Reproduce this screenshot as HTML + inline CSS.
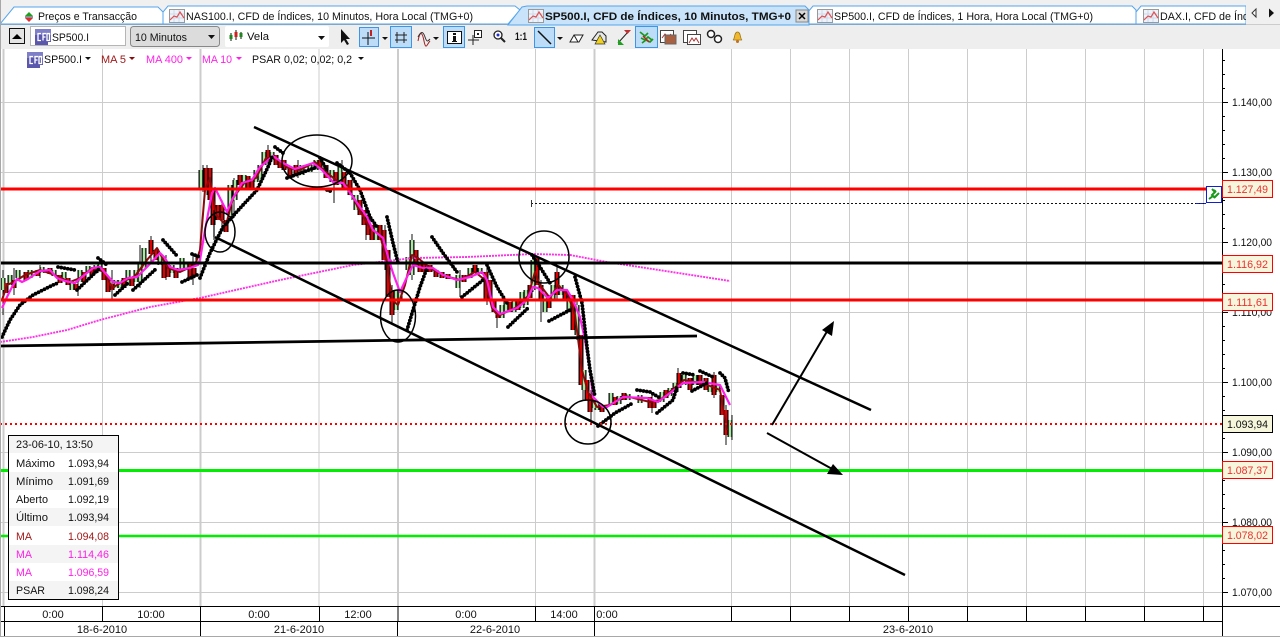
<!DOCTYPE html>
<html><head><meta charset="utf-8"><style>
html,body{margin:0;padding:0;width:1280px;height:637px;overflow:hidden;background:#fff}
svg{display:block}
text{font-family:"Liberation Sans",sans-serif;font-size:11px;fill:#111}
</style></head><body>
<svg width="1280" height="637" viewBox="0 0 1280 637" xmlns="http://www.w3.org/2000/svg">
<defs>
<g id="ci"><rect x=".5" y=".5" width="15" height="13" fill="#eef3fa" stroke="#999"/><path d="M1 5h14M1 9h14M5 1v12M10 1v12" stroke="#cdd9ea" fill="none"/><path d="M1 11L5 7 8 8 11 3 15 9" stroke="#e05050" fill="none" stroke-width="1.2"/></g>
<g id="cfd"><rect width="16" height="16" fill="#5a57ad"/><rect x="0" y="0" width="16" height="6" fill="#7f7fc8"/><path d="M6 4.5H3v7h3M8 11.5v-7h3M8 8h2.5M12 4.5h2.5v7H12z" stroke="#fff" stroke-width="1.3" fill="none"/><rect x="13" y="13" width="3" height="3" fill="#fff"/></g>
<path id="red" d="M6 283v10M14 280v8M26 272v8M38 270v6M50 268v6M60 275v8M68 278v7M76 284v6M84 272v10M92 268v8M104 268v12M108 278v14M112 284v6M124 278v10M132 278v8M151 240v14M156 250v10M164 262v16M168 265v12M176 268v10M190 262v16M194 268v8M206 168v20M210 168v32M213 190v35M218 205v15M222 205v15M226 220v12M240 175v10M248 176v12M252 180v10M268 150v12M276 155v10M280 160v8M284 160v10M290 168v10M296 165v10M320 160v8M326 165v13M336 172v13M344 172v16M350 180v15M360 200v15M364 210v15M368 215v20M372 225v15M380 225v15M384 230v30M388 250v47M392 290v25M416 250v15M420 262v10M424 263v9M430 265v7M436 270v7M442 272v6M448 274v5M464 275v7M475 265v7M486 272v28M490 280v20M494 300v12M498 312v6M510 302v10M518 300v10M530 285v13M537 258v27M541 285v15M549 295v13M557 272v23M565 290v10M573 295v35M581 335v50M587 380v20M590 395v17M602 405v7M615 397v8M624 393v7M650 397v11M654 400v8M666 390v8M679 373v15M690 378v12M700 375v10M706 378v12M714 375v20M722 395v20M726 410v25"/>
<path id="grn" d="M3 278v12M10 275v10M18 270v8M30 270v8M42 267v6M54 270v6M64 272v6M72 282v8M80 270v12M88 266v6M96 265v8M100 263v8M116 280v8M120 280v8M128 270v16M136 270v12M140 262v20M144 248v20M160 255v10M172 265v8M182 258v12M186 262v8M198 255v8M201 170v18M230 185v30M235 180v20M244 175v15M256 170v12M260 165v15M264 152v13M272 152v8M302 165v10M310 165v7M316 160v10M332 170v12M340 165v20M356 195v15M376 225v15M396 290v20M400 290v10M408 257v13M412 240v35M458 275v13M470 268v10M480 268v6M502 305v13M506 300v12M514 300v12M522 292v16M526 290v15M533 260v30M545 295v17M553 285v15M561 285v10M569 295v15M577 305v30M584 370v20M594 400v8M597 402v8M611 393v12M619 396v8M628 394v6M640 395v8M662 392v10M670 388v8M675 383v9M684 375v10M695 375v10M710 385v7M718 385v7M730 420v17"/>
</defs>

<!-- top strip and tabs -->
<rect width="1280" height="49" fill="#f0f0f0"/>
<rect x="0" y="25" width="1280" height="24" fill="#eeeeee"/>
<rect x="0" y="24" width="1280" height="1" fill="#a9a9a9"/>
<path d="M0 24L14 7H158L163 12V24Z" fill="#fff" stroke="#55a5ec"/>
<path d="M163 24V12L168 6H515L520 10L508 24Z" fill="#fff" stroke="#55a5ec"/>
<path d="M808 24V12L813 6H1132L1136 10V24Z" fill="#fff" stroke="#55a5ec"/>
<path d="M1136 24V12L1141 6H1246V24Z" fill="#fff" stroke="#55a5ec"/>
<path d="M508 25L522 7L527 6H805L809 10V25Z" fill="#c8e3fa" stroke="#55a5ec"/>
<path d="M29 12l-4 4h8z" fill="#20a020"/><path d="M25 18h8l-4 4z" fill="#d83030"/><rect x="25" y="16.500" width="8" height="1" fill="#222"/>
<text x="38" y="20" textLength="99" lengthAdjust="spacingAndGlyphs" font-size="12">Preços e Transacção</text>
<use href="#ci" x="169" y="9"/>
<text x="186" y="20" textLength="287" lengthAdjust="spacingAndGlyphs">NAS100.I, CFD de Índices, 10 Minutos, Hora Local (TMG+0)</text>
<use href="#ci" x="528" y="9"/>
<text x="545" y="20" textLength="246" lengthAdjust="spacingAndGlyphs" font-weight="bold">SP500.I, CFD de Índices, 10 Minutos, TMG+0</text>
<rect x="796" y="10" width="12" height="12" fill="#d8d8d8" stroke="#888"/><path d="M799 13l6 6M805 13l-6 6" stroke="#000" stroke-width="1.5"/>
<use href="#ci" x="817" y="9"/>
<text x="834" y="20" textLength="259" lengthAdjust="spacingAndGlyphs">SP500.I, CFD de Índices, 1 Hora, Hora Local (TMG+0)</text>
<use href="#ci" x="1143" y="9"/>
<svg x="1160" y="6" width="86" height="18"><text x="0" y="14" textLength="108" lengthAdjust="spacingAndGlyphs">DAX.I, CFD de Índices</text></svg>
<rect x="1246" y="0" width="34" height="24.500" fill="#f0f0f0"/>
<path d="M1256 9l-4 4 4 4z" fill="#fff" stroke="#333"/><path d="M1269 8.500l5 4.500-5 4.500z" fill="#111"/>

<!-- toolbar -->
<rect x="9.500" y="28.500" width="15" height="15" fill="#e4e4e4" stroke="#111"/><path d="M12 39l5-5 5 5z" fill="#000"/>
<rect x="30.500" y="26.500" width="95" height="19" fill="#fff" stroke="#b5b5b5"/>
<use href="#cfd" x="35" y="29"/><text x="52" y="41" textLength="37" lengthAdjust="spacingAndGlyphs">SP500.I</text>
<rect x="130.500" y="26.500" width="89" height="20" rx="3" fill="#dcdcdc" stroke="#888"/><text x="135" y="41" textLength="52" lengthAdjust="spacingAndGlyphs">10 Minutos</text><path d="M208 35h7l-3.500 4z" fill="#111"/>
<rect x="225" y="26" width="104" height="21" rx="2" fill="#fff"/><path d="M231 33v8M236 30v10M241 32v7" stroke="#111"/><rect x="229.500" y="35" width="3" height="4" fill="#1a8a1a"/><rect x="234.500" y="32" width="3" height="5" fill="#d02020"/><rect x="239.500" y="33" width="3" height="4" fill="#1a8a1a"/>
<text x="247" y="40" textLength="22" lengthAdjust="spacingAndGlyphs">Vela</text><path d="M318 36h7l-3.500 4z" fill="#111"/>
<path d="M341 29v14l3-3 3 5 2-1-3-5h4z" fill="#111"/>
<rect x="359.500" y="27.500" width="19" height="19" fill="#bcdcf8" stroke="#3d95e8"/><path d="M362 38h13M368 32v13" stroke="#111"/><rect x="370" y="30" width="2" height="6" fill="#c02020"/>
<path d="M382 37h6l-3 3z" fill="#111"/>
<rect x="390.500" y="26.500" width="21" height="21" fill="#bcdcf8" stroke="#3d95e8"/><path d="M397 32v11M404 32v11M395 35h12M395 40h12" stroke="#222"/>
<path d="M418 41c2-10 4-10 6 0s3 3 6 0" fill="none" stroke="#a02020"/><path d="M418 37c3-6 5-6 7 0s3 4 5 2" fill="none" stroke="#333"/>
<path d="M433 37h6l-3 3z" fill="#111"/>
<rect x="443.500" y="26.500" width="21" height="21" fill="#bcdcf8" stroke="#3d95e8"/><rect x="447.500" y="31.500" width="14" height="12" fill="#fff" stroke="#111"/><path d="M453 33h3v2h-3zM453 36h3v5h1v1h-5v-1h1z" fill="#111"/>
<path d="M468 40h11M473 35v10" stroke="#222"/><rect x="474.500" y="30.500" width="7" height="7" fill="#fff" stroke="#222"/><rect x="477" y="33" width="2" height="2" fill="#222"/>
<circle cx="498" cy="35" r="4" fill="#fff" stroke="#222" stroke-width="1.300"/><circle cx="498" cy="35" r="1.500" fill="#2030d0"/><path d="M501 38l4 4" stroke="#222" stroke-width="2"/>
<text x="515" y="40" font-weight="bold" textLength="12" lengthAdjust="spacingAndGlyphs">1:1</text>
<rect x="534.500" y="27.500" width="20" height="20" fill="#bcdcf8" stroke="#3d95e8"/><path d="M538 31l13 13" stroke="#111" stroke-width="1.500"/>
<path d="M557 37h6l-3 3z" fill="#111"/>
<path d="M570 42l4-7h9l-4 7z" fill="#fff" stroke="#222"/><path d="M574 35l4 7" stroke="#222" fill="none"/>
<path d="M592 40l6-8h4l4 4v6z" fill="#e8e8e8" stroke="#222"/><path d="M600 35l5 9h-10z" fill="#f0d020" stroke="#333" stroke-width=".7"/>
<path d="M618 43L628 32" stroke="#222"/><path d="M624 30h7l-3.500 4z" fill="#c03030"/><path d="M618 39v6h6z" fill="#20a020"/>
<rect x="635.500" y="26.500" width="22" height="21" fill="#bcdcf8" stroke="#3d95e8"/><path d="M640 32l5 4 3-3M641 38l4 2 3-3 4 3M642 43l4-3 4 2 3-3" fill="none" stroke="#1a9a1a" stroke-width="1.700"/><path d="M643 36l6 6" stroke="#c02020" stroke-width="1.500"/>
<rect x="660.500" y="30.500" width="13" height="12" fill="#fff" stroke="#444"/><path d="M662 38l3-4 3 3 3-3" stroke="#b03030" fill="none"/><rect x="665" y="35" width="11" height="9" fill="#a86040" stroke="#666"/>
<rect x="683.500" y="30.500" width="13" height="12" fill="#fff" stroke="#444"/><rect x="687.500" y="34.500" width="13" height="10" fill="#fff" stroke="#444"/><path d="M689 43l3-5 2 3 2-3 3 5" stroke="#b03030" fill="none"/>
<circle cx="711" cy="34" r="3.500" fill="#fff" stroke="#222" stroke-width="1.500"/><circle cx="718" cy="39" r="3.500" fill="#fff" stroke="#222" stroke-width="1.500"/>
<path d="M733 40c2-1 1-8 4.500-8s2.500 7 4.500 8z" fill="#f0b830" stroke="#a07818" stroke-width=".8"/><circle cx="737.500" cy="41.500" r="1.500" fill="#c07020"/>

<!-- grid -->
<g stroke="#cccccc" fill="none">
<path d="M0 102.500H1222M0 172.500H1222M0 242.500H1222M0 312.500H1222M0 382.500H1222M0 452.500H1222M0 522.500H1222M0 592.500H1222"/>
<path d="M102.500 49V606M319 49V606M535.500 49V606M731.500 49V606M790.500 49V606M849.500 49V606M908.500 49V606M967.500 49V606M1026.500 49V606M1085.500 49V606M1144.500 49V606M1203.500 49V606"/>
<path d="M3.500 49V606M200.500 49V606M398 49V606M594.500 49V606" stroke-width="2"/>
</g>

<!-- candles -->
<path d="M3 270V315M14 268V295M40 265V278M78 280V296M112 270V300M140 245V288M151 236V262M166 255V280M193 255V285M203 165V192M207 165V195M214 188V240M222 200V228M234 178V218M268 145V165M298 160V178M334 170V203M342 160V190M352 180V200M366 205V240M385 225V270M392 285V325M412 234V280M460 270V297M487 265V305M497 310V328M541 280V322M533 254V292M557 265V300M577 300V340M583 345V400M591 390V425M652 395V413M678 368V392M714 372V398M726 405V445M732 415V440" stroke="#111" fill="none"/>
<use href="#red" fill="none" stroke="#000" stroke-width="5"/>
<use href="#grn" fill="none" stroke="#000" stroke-width="5"/>
<use href="#red" fill="none" stroke="#e00000" stroke-width="2.500"/>
<use href="#grn" fill="none" stroke="#a8e8a0" stroke-width="2.500"/>

<!-- MA400 -->
<path d="M0 342L33 337 67 330 100 320 150 307 200 298 280 280 353 265 413 258 467 257 533 254 570 255 607 262 730 281" fill="none" stroke="#ff30e8" stroke-width="1.900" stroke-dasharray="2 1"/>
<!-- MA5 -->
<path d="M2 300L7 285 14 282 25 275 40 270 55 275 70 282 80 278 92 268 105 272 112 288 122 282 135 276 147 260 157 248 168 268 180 272 195 265 200 250 205 190 210 178 216 215 226 225 233 198 245 182 256 178 266 158 276 158 288 168 300 170 315 162 326 172 336 180 348 186 358 208 370 228 380 235 387 262 392 300 398 305 405 285 412 255 418 258 430 268 445 276 460 280 475 272 485 280 492 308 498 316 515 308 528 296 535 272 540 285 550 298 558 285 568 295 575 315 582 370 588 392 597 407 610 405 625 396 650 402 660 400 672 390 684 380 705 384 720 390 727 430" fill="none" stroke="#8b0a0a" stroke-width="2" stroke-linejoin="round"/>
<!-- MA10 -->
<path d="M2 308L7 297 12 287 17 279 22 282 28 279 40 271 50 270 57 278 65 281 75 283 82 277 93 268 100 267 107 275 113 282 120 283 128 278 137 277 147 267 160 253 165 258 170 267 178 270 190 268 198 265 200 260 205 230 212 193 215 188 222 202 227 212 233 198 242 183 252 180 260 167 273 156 283 163 295 169 313 163 322 170 333 182 343 183 353 197 367 217 373 230 383 238 388 257 393 273 400 292 407 277 413 265 423 268 433 268 443 275 457 280 470 277 482 272 487 280 493 307 500 314 517 308 527 300 533 287 538 288 548 298 557 290 567 290 573 300 580 317 585 340 590 370 593 397 603 407 607 407 623 397 647 398 658 402 670 393 683 383 703 382 720 385 730 405" fill="none" stroke="#ff20e8" stroke-width="2.200" stroke-linejoin="round"/>
<!-- PSAR -->
<g fill="none" stroke="#000" stroke-width="3.800" stroke-linecap="round" stroke-dasharray="0 3.300">
<path d="M2 337L10 320 20 305 33 295 53 285 58 283"/>
<path d="M58 267L75 270M77 290L100 268M98 258L107 265M115 295L128 283M133 290L157 268M163 240L178 257M192 254L200 257M182 282L197 275"/>
<path d="M200 278L210 253 223 227 243 205 257 190 268 167 272 157M275 147L283 153M287 178L317 167M320 158L327 170M327 190L333 192M337 163L350 173 360 190 370 217 377 227M387 217L393 243 398 263M407 330L413 310 420 287 427 268M432 237L443 253 457 272M462 297L483 280M487 265L497 287 507 303M508 327L528 308M532 255L540 267 550 283M549 321L570 310M575 277L582 303 587 347 590 370 595 397M598 426L615 413 633 403M637 390L650 392 660 398M657 413L673 400 677 387M683 373L695 375M692 391L707 383M700 371L713 377M720 373L725 378 729 393"/>
</g>

<!-- horizontal lines -->
<path d="M0 189H1206" stroke="#ff0000" stroke-width="3"/>
<path d="M0 263H1222" stroke="#000" stroke-width="3"/>
<path d="M0 300H1222" stroke="#ff0000" stroke-width="3"/>
<path d="M0 424H1222" stroke="#ff0000" stroke-width="2" stroke-dasharray="2 3"/>
<path d="M0 470.500H1222" stroke="#00ee00" stroke-width="3"/>
<path d="M0 536H1222" stroke="#00ee00" stroke-width="2.500"/>
<path d="M531 203.500H1206" stroke="#111" stroke-dasharray="2 2" fill="none"/><path d="M531.500 200V207" stroke="#333"/><path d="M1196 203.500h10" stroke="#1020d0" stroke-dasharray="3 1"/>
<rect x="1206.500" y="186.500" width="15" height="16" fill="#fff" stroke="#1020d0"/><path d="M1212 189l3 3-3 3 3 3M1209 199l4-3 2 1 4-4M1214 190l2 2" stroke="#1a9a1a" fill="none" stroke-width="2"/>

<!-- trendlines -->
<g fill="none" stroke="#000">
<path d="M254 127L871 410" stroke-width="2.500"/>
<path d="M215 237L905 575" stroke-width="2.500"/>
<path d="M0 346L697 336" stroke-width="2.800"/>
<path d="M214 210V237" stroke-width="1.200"/>
<ellipse cx="220" cy="232" rx="15" ry="20" stroke-width="1.500"/>
<ellipse cx="317" cy="161" rx="35" ry="26" stroke-width="1.500"/>
<ellipse cx="398" cy="316" rx="17.500" ry="26" stroke-width="1.500"/>
<ellipse cx="544" cy="257" rx="25" ry="26" stroke-width="1.500"/>
<ellipse cx="588" cy="422" rx="23" ry="22" stroke-width="1.500"/>
<path d="M772 425L829 328" stroke-width="2"/>
<path d="M767 433L834 470" stroke-width="2"/>
</g>
<path d="M834 321L832 336 822 330zM843 475L827 474 833 464z" fill="#000"/>

<!-- right axis -->
<path d="M1222.500 49V636" stroke="#000"/>
<path d="M1222 60.500h3M1222 74.500h3M1222 88.500h3M1222 116.500h3M1222 130.500h3M1222 144.500h3M1222 158.500h3M1222 186.500h3M1222 200.500h3M1222 214.500h3M1222 228.500h3M1222 256.500h3M1222 270.500h3M1222 284.500h3M1222 298.500h3M1222 326.500h3M1222 340.500h3M1222 354.500h3M1222 368.500h3M1222 396.500h3M1222 410.500h3M1222 424.500h3M1222 438.500h3M1222 466.500h3M1222 480.500h3M1222 494.500h3M1222 508.500h3M1222 536.500h3M1222 550.500h3M1222 564.500h3M1222 578.500h3M1222 102.500h6M1222 172.500h6M1222 242.500h6M1222 312.500h6M1222 382.500h6M1222 452.500h6M1222 522.500h6M1222 592.500h6" stroke="#000"/>
<text x="1232" y="106" textLength="40" lengthAdjust="spacingAndGlyphs">1.140,00</text>
<text x="1232" y="176" textLength="40" lengthAdjust="spacingAndGlyphs">1.130,00</text>
<text x="1232" y="246" textLength="40" lengthAdjust="spacingAndGlyphs">1.120,00</text>
<text x="1232" y="316" textLength="40" lengthAdjust="spacingAndGlyphs">1.110,00</text>
<text x="1232" y="386" textLength="40" lengthAdjust="spacingAndGlyphs">1.100,00</text>
<text x="1232" y="456" textLength="40" lengthAdjust="spacingAndGlyphs">1.090,00</text>
<text x="1232" y="526" textLength="40" lengthAdjust="spacingAndGlyphs">1.080,00</text>
<text x="1232" y="596" textLength="40" lengthAdjust="spacingAndGlyphs">1.070,00</text>
<g fill="#f6f6dc" stroke="#ff0000">
<rect x="1222.500" y="180.500" width="50" height="17"/>
<rect x="1222.500" y="255.500" width="50" height="17"/>
<rect x="1222.500" y="293.500" width="50" height="17"/>
<rect x="1222.500" y="415.500" width="50" height="17" stroke="#000"/>
<rect x="1222.500" y="461.500" width="50" height="17"/>
<rect x="1222.500" y="526.500" width="50" height="17"/>
</g>
<text x="1227" y="193" textLength="41" lengthAdjust="spacingAndGlyphs" style="fill:#f03030">1.127,49</text>
<text x="1227" y="268" textLength="41" lengthAdjust="spacingAndGlyphs" style="fill:#f03030">1.116,92</text>
<text x="1227" y="306" textLength="41" lengthAdjust="spacingAndGlyphs" style="fill:#f03030">1.111,61</text>
<text x="1227" y="428" textLength="41" lengthAdjust="spacingAndGlyphs">1.093,94</text>
<text x="1227" y="474" textLength="41" lengthAdjust="spacingAndGlyphs" style="fill:#f03030">1.087,37</text>
<text x="1227" y="539" textLength="41" lengthAdjust="spacingAndGlyphs" style="fill:#f03030">1.078,02</text>

<!-- legend -->
<use href="#cfd" x="27" y="52"/>
<text x="44" y="63" textLength="38" lengthAdjust="spacingAndGlyphs">SP500.I</text><path d="M85 57h6l-3 3z" fill="#111"/>
<text x="101" y="63" textLength="25" lengthAdjust="spacingAndGlyphs" style="fill:#a01818">MA 5</text><path d="M129 57h6l-3 3z" fill="#8b0a0a"/>
<text x="146" y="63" textLength="37" lengthAdjust="spacingAndGlyphs" style="fill:#ff20e8">MA 400</text><path d="M186 57h6l-3 3z" fill="#ff20e8"/>
<text x="202" y="63" textLength="30" lengthAdjust="spacingAndGlyphs" style="fill:#ff20e8">MA 10</text><path d="M236 57h6l-3 3z" fill="#ff20e8"/>
<text x="252" y="63" textLength="100" lengthAdjust="spacingAndGlyphs">PSAR 0,02; 0,02; 0,2</text><path d="M358 57h6l-3 3z" fill="#111"/>

<!-- info box -->
<rect x="8.500" y="435.500" width="110" height="164" fill="#fff" stroke="#000"/>
<g fill="#f4f4f4"><rect x="9" y="436" width="109" height="17"/><rect x="9" y="472" width="109" height="18"/><rect x="9" y="508" width="109" height="18"/><rect x="9" y="545" width="109" height="18"/><rect x="9" y="581" width="109" height="18"/></g>
<text x="16" y="448" textLength="77" lengthAdjust="spacingAndGlyphs">23-06-10, 13:50</text>
<text x="16" y="467" textLength="39" lengthAdjust="spacingAndGlyphs">Máximo</text><text x="68" y="467" textLength="41" lengthAdjust="spacingAndGlyphs">1.093,94</text>
<text x="16" y="485" textLength="37" lengthAdjust="spacingAndGlyphs">Mínimo</text><text x="68" y="485" textLength="41" lengthAdjust="spacingAndGlyphs">1.091,69</text>
<text x="16" y="503" textLength="32" lengthAdjust="spacingAndGlyphs">Aberto</text><text x="68" y="503" textLength="41" lengthAdjust="spacingAndGlyphs">1.092,19</text>
<text x="16" y="521" textLength="32" lengthAdjust="spacingAndGlyphs">Último</text><text x="68" y="521" textLength="41" lengthAdjust="spacingAndGlyphs">1.093,94</text>
<text x="16" y="540" style="fill:#a01818" textLength="16" lengthAdjust="spacingAndGlyphs">MA</text><text x="68" y="540" style="fill:#a01818" textLength="41" lengthAdjust="spacingAndGlyphs">1.094,08</text>
<text x="16" y="558" style="fill:#ff20e8" textLength="16" lengthAdjust="spacingAndGlyphs">MA</text><text x="68" y="558" style="fill:#ff20e8" textLength="41" lengthAdjust="spacingAndGlyphs">1.114,46</text>
<text x="16" y="576" style="fill:#ff20e8" textLength="16" lengthAdjust="spacingAndGlyphs">MA</text><text x="68" y="576" style="fill:#ff20e8" textLength="41" lengthAdjust="spacingAndGlyphs">1.096,59</text>
<text x="16" y="594" textLength="29" lengthAdjust="spacingAndGlyphs">PSAR</text><text x="68" y="594" textLength="41" lengthAdjust="spacingAndGlyphs">1.098,24</text>

<!-- time axis -->
<rect x="0" y="607" width="1280" height="30" fill="#fff"/>
<path d="M0 606.500H1280M0 621.500H1222M4.500 606V636M102.500 606V621M200.500 606V636M319.500 606V621M398 606V621M397.500 621V636M535.500 606V621M594.500 606V636M731.500 606V621M790.500 606V621M849.500 606V621M908.500 606V621M967.500 606V621M1026.500 606V621M1085.500 606V621M1144.500 606V621M1203.500 606V621" stroke="#000" fill="none"/>
<path d="M1222.500 606V636" stroke="#000"/>
<path d="M0 636.500H1280M.5 0V637" stroke="#a8a8a8"/>
<g text-anchor="middle">
<text x="53" y="618">0:00</text><text x="151" y="618">10:00</text><text x="259" y="618">0:00</text><text x="358" y="618">12:00</text><text x="466" y="618">0:00</text><text x="564" y="618">14:00</text><text x="607" y="618">0:00</text>
<text x="102" y="633">18-6-2010</text><text x="299" y="633">21-6-2010</text><text x="495" y="633">22-6-2010</text><text x="908" y="633">23-6-2010</text>
</g>
</svg>
</body></html>
